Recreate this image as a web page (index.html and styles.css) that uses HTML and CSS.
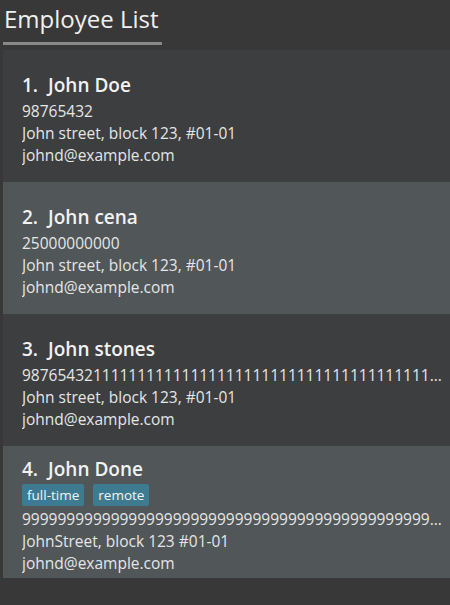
FILE: index.html
```html
<!DOCTYPE html>
<html>
<head>
<meta charset="utf-8">
<link rel="stylesheet" href="styles.css">
</head>
<body>
<div class="header">
  <div class="tab">Employee List</div>
</div>
<div class="list">
  <div class="card odd">
    <div class="name"><span class="idx">1. </span>John Doe</div>
    <div class="line">98765432</div>
    <div class="line">John street, block 123, #01-01</div>
    <div class="line">johnd@example.com</div>
  </div>
  <div class="card even">
    <div class="name"><span class="idx">2. </span>John cena</div>
    <div class="line">25000000000</div>
    <div class="line">John street, block 123, #01-01</div>
    <div class="line">johnd@example.com</div>
  </div>
  <div class="card odd">
    <div class="name"><span class="idx">3. </span>John stones</div>
    <div class="line">9876543211111111111111111111111111111111111111111111</div>
    <div class="line">John street, block 123, #01-01</div>
    <div class="line">johnd@example.com</div>
  </div>
  <div class="card even">
    <div class="name"><span class="idx">4. </span>John Done</div>
    <div class="tags"><span class="tag">full-time</span><span class="tag">remote</span></div>
    <div class="line">9999999999999999999999999999999999999999999999999999</div>
    <div class="line">JohnStreet, block 123 #01-01</div>
    <div class="line">johnd@example.com</div>
  </div>
</div>
</body>
</html>
```
FILE: styles.css
```css
html, body {
  margin: 0;
  padding: 0;
  background: #383838;
  font-family: "Open Sans", sans-serif;
  width: 450px;
  height: 605px;
  overflow: hidden;
}
.header {
  height: 50px;
  padding-left: 3px;
  box-sizing: border-box;
}
.tab {
  width: 159px;
  height: 45px;
  box-sizing: border-box;
  border-bottom: 3px solid #888888;
  color: #f0f0f0;
  font-size: 24px;
  line-height: 38px;
  padding-left: 1px;
  white-space: nowrap;
}
.list {
  margin-left: 3px;
  background: #3c3e40;
}
.card {
  height: 132px;
  display: flex;
  flex-direction: column;
  justify-content: center;
  padding: 4px 5px 0 19px;
  box-sizing: border-box;
}
.odd { background: #3c3e40; }
.even { background: #515658; }
.name {
  color: #f2f2f2;
  font-size: 19px;
  font-weight: 600;
  line-height: 30px;
}
.idx {
  margin-right: 5px;
}
.line {
  color: #e6e6e6;
  font-size: 15.5px;
  line-height: 22px;
  white-space: nowrap;
  overflow: hidden;
  text-overflow: ellipsis;
}
.tags {
  display: flex;
  gap: 9px;
  margin: 0 0 2px;
}
.tag {
  background: #3e7b91;
  color: #f4f4f4;
  font-size: 13.5px;
  line-height: 22px;
  padding: 0 5px;
  border-radius: 2px;
}
```
